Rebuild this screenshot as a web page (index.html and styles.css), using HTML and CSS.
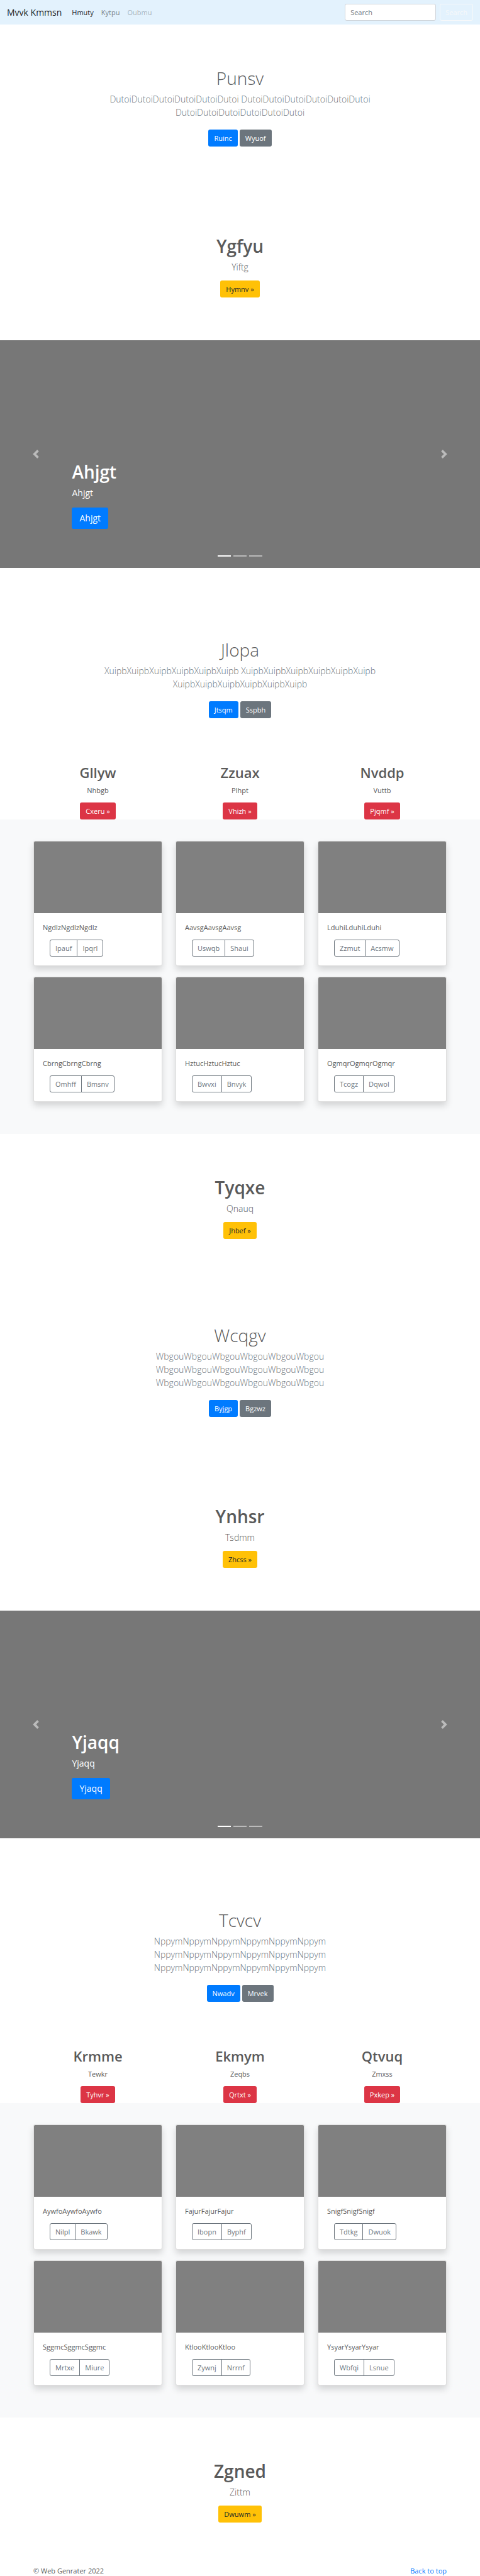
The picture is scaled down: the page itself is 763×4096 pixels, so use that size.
FILE: index.html
```html
<!DOCTYPE html>
<html lang="en">
<head>
<meta charset="utf-8">
<meta name="viewport" content="width=device-width, initial-scale=1">
<title>Mvvk Kmmsn</title>
<link rel="stylesheet" href="styles.css">
</head>
<body id="top">
<nav class="navbar">
  <a class="brand" href="#">Mvvk Kmmsn</a>
  <ul class="nav-links">
    <li><a class="nav-link active" href="#">Hmuty</a></li>
    <li><a class="nav-link" href="#">Kytpu</a></li>
    <li><a class="nav-link disabled" href="#">Oubmu</a></li>
  </ul>
  <form class="search">
    <input class="search-input" type="search" placeholder="Search" aria-label="Search">
    <button class="btn btn-outline-light" type="submit">Search</button>
  </form>
</nav>

<main>
  <section class="intro">
    <h1 class="title title-light">Punsv</h1>
    <p class="lead muted">DutoiDutoiDutoiDutoiDutoiDutoi DutoiDutoiDutoiDutoiDutoiDutoi DutoiDutoiDutoiDutoiDutoiDutoi</p>
    <div class="actions"><a class="btn btn-primary" href="#">Ruinc</a><a class="btn btn-secondary" href="#">Wyuof</a></div>
  </section>

  <section class="feature">
    <h1 class="title">Ygfyu</h1>
    <p class="lead">Yiftg</p>
    <a class="btn btn-warning" href="#">Hymnv »</a>
  </section>

  <section class="carousel">
    <div class="caption">
      <h1 class="title">Ahjgt</h1>
      <p class="caption-text">Ahjgt</p>
      <a class="btn btn-primary btn-lg" href="#">Ahjgt</a>
    </div>
    <button class="control control-prev" type="button" aria-label="Previous"><svg class="chevron" viewBox="0 0 8 8"><path d="M5.25 0l-4 4 4 4 1.5-1.5L4.25 4l2.5-2.5L5.25 0z"/></svg></button>
    <button class="control control-next" type="button" aria-label="Next"><svg class="chevron" viewBox="0 0 8 8"><path d="M2.75 0l-1.5 1.5L3.75 4l-2.5 2.5L2.75 8l4-4-4-4z"/></svg></button>
    <div class="indicators"><span class="bar current"></span><span class="bar"></span><span class="bar"></span></div>
  </section>

  <section class="intro">
    <h1 class="title title-light">Jlopa</h1>
    <p class="lead muted">XuipbXuipbXuipbXuipbXuipbXuipb XuipbXuipbXuipbXuipbXuipbXuipb XuipbXuipbXuipbXuipbXuipbXuipb</p>
    <div class="actions"><a class="btn btn-primary" href="#">Jtsqm</a><a class="btn btn-secondary" href="#">Sspbh</a></div>
  </section>

  <section class="container columns marketing">
    <div><h2 class="subtitle">Gllyw</h2><p class="text">Nhbgb</p><a class="btn btn-danger" href="#">Cxeru »</a></div>
    <div><h2 class="subtitle">Zzuax</h2><p class="text">Plhpt</p><a class="btn btn-danger" href="#">Vhizh »</a></div>
    <div><h2 class="subtitle">Nvddp</h2><p class="text">Vuttb</p><a class="btn btn-danger" href="#">Pjqmf »</a></div>
  </section>

  <section class="album">
    <div class="container columns">
      <article class="card"><div class="thumb"></div><div class="card-body"><p class="text">NgdlzNgdlzNgdlz</p><div class="group"><button class="btn btn-outline" type="button">Ipauf</button><button class="btn btn-outline" type="button">Ipqrl</button></div></div></article>
      <article class="card"><div class="thumb"></div><div class="card-body"><p class="text">AavsgAavsgAavsg</p><div class="group"><button class="btn btn-outline" type="button">Uswqb</button><button class="btn btn-outline" type="button">Shaui</button></div></div></article>
      <article class="card"><div class="thumb"></div><div class="card-body"><p class="text">LduhiLduhiLduhi</p><div class="group"><button class="btn btn-outline" type="button">Zzmut</button><button class="btn btn-outline" type="button">Acsmw</button></div></div></article>
      <article class="card"><div class="thumb"></div><div class="card-body"><p class="text">CbrngCbrngCbrng</p><div class="group"><button class="btn btn-outline" type="button">Omhff</button><button class="btn btn-outline" type="button">Bmsnv</button></div></div></article>
      <article class="card"><div class="thumb"></div><div class="card-body"><p class="text">HztucHztucHztuc</p><div class="group"><button class="btn btn-outline" type="button">Bwvxi</button><button class="btn btn-outline" type="button">Bnvyk</button></div></div></article>
      <article class="card"><div class="thumb"></div><div class="card-body"><p class="text">OgmqrOgmqrOgmqr</p><div class="group"><button class="btn btn-outline" type="button">Tcogz</button><button class="btn btn-outline" type="button">Dqwol</button></div></div></article>
    </div>
  </section>

  <section class="feature">
    <h1 class="title">Tyqxe</h1>
    <p class="lead">Qnauq</p>
    <a class="btn btn-warning" href="#">Jhbef »</a>
  </section>

  <section class="intro">
    <h1 class="title title-light">Wcqgv</h1>
    <p class="lead muted">WbgouWbgouWbgouWbgouWbgouWbgou WbgouWbgouWbgouWbgouWbgouWbgou WbgouWbgouWbgouWbgouWbgouWbgou</p>
    <div class="actions"><a class="btn btn-primary" href="#">Byjgp</a><a class="btn btn-secondary" href="#">Bgzwz</a></div>
  </section>

  <section class="feature">
    <h1 class="title">Ynhsr</h1>
    <p class="lead">Tsdmm</p>
    <a class="btn btn-warning" href="#">Zhcss »</a>
  </section>

  <section class="carousel">
    <div class="caption">
      <h1 class="title">Yjaqq</h1>
      <p class="caption-text">Yjaqq</p>
      <a class="btn btn-primary btn-lg" href="#">Yjaqq</a>
    </div>
    <button class="control control-prev" type="button" aria-label="Previous"><svg class="chevron" viewBox="0 0 8 8"><path d="M5.25 0l-4 4 4 4 1.5-1.5L4.25 4l2.5-2.5L5.25 0z"/></svg></button>
    <button class="control control-next" type="button" aria-label="Next"><svg class="chevron" viewBox="0 0 8 8"><path d="M2.75 0l-1.5 1.5L3.75 4l-2.5 2.5L2.75 8l4-4-4-4z"/></svg></button>
    <div class="indicators"><span class="bar current"></span><span class="bar"></span><span class="bar"></span></div>
  </section>

  <section class="intro">
    <h1 class="title title-light">Tcvcv</h1>
    <p class="lead muted">NppymNppymNppymNppymNppymNppym NppymNppymNppymNppymNppymNppym NppymNppymNppymNppymNppymNppym</p>
    <div class="actions"><a class="btn btn-primary" href="#">Nwadv</a><a class="btn btn-secondary" href="#">Mrvek</a></div>
  </section>

  <section class="container columns marketing">
    <div><h2 class="subtitle">Krmme</h2><p class="text">Tewkr</p><a class="btn btn-danger" href="#">Tyhvr »</a></div>
    <div><h2 class="subtitle">Ekmym</h2><p class="text">Zeqbs</p><a class="btn btn-danger" href="#">Qrtxt »</a></div>
    <div><h2 class="subtitle">Qtvuq</h2><p class="text">Zmxss</p><a class="btn btn-danger" href="#">Pxkep »</a></div>
  </section>

  <section class="album">
    <div class="container columns">
      <article class="card"><div class="thumb"></div><div class="card-body"><p class="text">AywfoAywfoAywfo</p><div class="group"><button class="btn btn-outline" type="button">Nilpl</button><button class="btn btn-outline" type="button">Bkawk</button></div></div></article>
      <article class="card"><div class="thumb"></div><div class="card-body"><p class="text">FajurFajurFajur</p><div class="group"><button class="btn btn-outline" type="button">Ibopn</button><button class="btn btn-outline" type="button">Byphf</button></div></div></article>
      <article class="card"><div class="thumb"></div><div class="card-body"><p class="text">SnigfSnigfSnigf</p><div class="group"><button class="btn btn-outline" type="button">Tdtkg</button><button class="btn btn-outline" type="button">Dwuok</button></div></div></article>
      <article class="card"><div class="thumb"></div><div class="card-body"><p class="text">SggmcSggmcSggmc</p><div class="group"><button class="btn btn-outline" type="button">Mrtxe</button><button class="btn btn-outline" type="button">Miure</button></div></div></article>
      <article class="card"><div class="thumb"></div><div class="card-body"><p class="text">KtlooKtlooKtloo</p><div class="group"><button class="btn btn-outline" type="button">Zywnj</button><button class="btn btn-outline" type="button">Nrrnf</button></div></div></article>
      <article class="card"><div class="thumb"></div><div class="card-body"><p class="text">YsyarYsyarYsyar</p><div class="group"><button class="btn btn-outline" type="button">Wbfqi</button><button class="btn btn-outline" type="button">Lsnue</button></div></div></article>
    </div>
  </section>

  <section class="feature">
    <h1 class="title">Zgned</h1>
    <p class="lead">Zittm</p>
    <a class="btn btn-warning" href="#">Dwuwm »</a>
  </section>
</main>

<footer class="container footer">
  <span>© Web Genrater 2022</span>
  <a class="top-link" href="#top">Back to top</a>
</footer>
</body>
</html>
```

FILE: styles.css
```css
* {
  box-sizing: border-box;
}

body {
  margin: 0;
  background: #fff;
  color: #5a5a5a;
  font-family: "Open Sans", "Noto Sans", sans-serif;
  font-size: 11px;
  line-height: 17px;
}

a {
  text-decoration: none;
}

/* Navigation */
.navbar {
  display: flex;
  align-items: center;
  padding: 6px 11px;
  background: #e3f2fd;
}

.brand {
  margin-right: 10px;
  color: rgba(0, 0, 0, 0.9);
  font-size: 14px;
  line-height: 21px;
}

.nav-links {
  display: flex;
  flex: 1;
  margin: 0;
  padding: 0;
  list-style: none;
}

.nav-link {
  padding: 0 6px;
  color: rgba(0, 0, 0, 0.5);
}

.nav-link.active {
  color: rgba(0, 0, 0, 0.9);
}

.nav-link.disabled {
  color: rgba(0, 0, 0, 0.3);
}

.search {
  display: flex;
  gap: 6px;
}

.search-input {
  width: 145px;
  height: 27px;
  padding: 4px 8px;
  border: 1px solid #ced4da;
  border-radius: 3px;
  background: #fff;
  color: #495057;
  font: inherit;
  appearance: none;
}

.search-input::placeholder {
  color: #6c757d;
  opacity: 1;
}

/* Buttons */
.btn {
  display: inline-block;
  padding: 4px 8px;
  border: 1px solid transparent;
  border-radius: 3px;
  background: transparent;
  font: inherit;
  color: #fff;
  white-space: nowrap;
  cursor: pointer;
}

.btn-primary {
  background: #007bff;
}

.btn-secondary {
  background: #6c757d;
}

.btn-warning {
  background: #ffc107;
  color: #212529;
}

.btn-danger {
  background: #dc3545;
}

.btn-outline-light {
  border-color: #f8f9fa;
  color: #f8f9fa;
}

.btn-outline {
  border-color: #6c757d;
  color: #6c757d;
}

.btn-lg {
  padding: 6px 11px;
  font-size: 14px;
  line-height: 20px;
}

/* Text */
.title,
.subtitle {
  margin: 0 0 6px;
  font-weight: 600;
}

.title {
  font-size: 28px;
  line-height: 34px;
}

.title-light {
  font-weight: 300;
}

.subtitle {
  font-size: 22px;
  line-height: 27px;
}

.lead {
  margin: 0;
  font-size: 14px;
  font-weight: 300;
  line-height: 21px;
}

.muted {
  color: #6c757d;
}

.text {
  margin: 0 0 11px;
}

/* Centred sections */
.intro,
.feature {
  display: flex;
  flex-direction: column;
  align-items: center;
  padding: 68px 11px;
  text-align: center;
}

.intro {
  max-width: 472px;
  margin: 0 auto;
}

.actions {
  display: flex;
  gap: 3px;
  margin: 17px 0 5px;
}

.feature .lead {
  margin-bottom: 11px;
}

/* Carousel */
.carousel {
  position: relative;
  height: 362px;
  margin-bottom: 45px;
  background: #777;
  color: #fff;
}

.caption {
  position: absolute;
  right: 15%;
  bottom: 62px;
  left: 15%;
  display: flex;
  flex-direction: column;
  align-items: flex-start;
}

.caption-text {
  margin: 0 0 13px;
  font-size: 14px;
  line-height: 21px;
}

.control {
  position: absolute;
  top: 0;
  bottom: 0;
  display: flex;
  align-items: center;
  justify-content: center;
  width: 15%;
  padding: 0;
  border: 0;
  background: none;
  opacity: 0.5;
  cursor: pointer;
}

.control-prev {
  left: 0;
}

.control-next {
  right: 0;
}

.chevron {
  width: 14px;
  height: 14px;
  fill: #fff;
}

.indicators {
  position: absolute;
  right: 0;
  bottom: 18px;
  left: 0;
  display: flex;
  justify-content: center;
  gap: 4px;
}

.bar {
  width: 21px;
  height: 2px;
  background: #fff;
  opacity: 0.5;
}

.bar.current {
  opacity: 1;
}

/* Grid */
.container {
  max-width: 679px;
  margin: 0 auto;
  padding: 0 11px;
}

.columns {
  display: grid;
  grid-template-columns: repeat(3, 1fr);
  gap: 17px 21px;
}

.marketing > div {
  display: flex;
  flex-direction: column;
  align-items: center;
}

.album {
  padding: 34px 0 51px;
  background: #f8f9fa;
}

.card {
  border: 1px solid rgba(0, 0, 0, 0.125);
  border-radius: 3px;
  background: #fff;
  box-shadow: 0 6px 11px rgba(0, 0, 0, 0.15);
}

.thumb {
  height: 114px;
  border-radius: 2px 2px 0 0;
  background: #808080;
}

.card-body {
  padding: 14px;
}

.group {
  display: flex;
  padding: 0 11px;
}

.group .btn:first-child {
  border-radius: 3px 0 0 3px;
}

.group .btn:last-child {
  margin-left: -1px;
  border-radius: 0 3px 3px 0;
}

/* Footer */
.footer {
  display: flex;
  justify-content: space-between;
}

.top-link {
  color: #007bff;
}
```
